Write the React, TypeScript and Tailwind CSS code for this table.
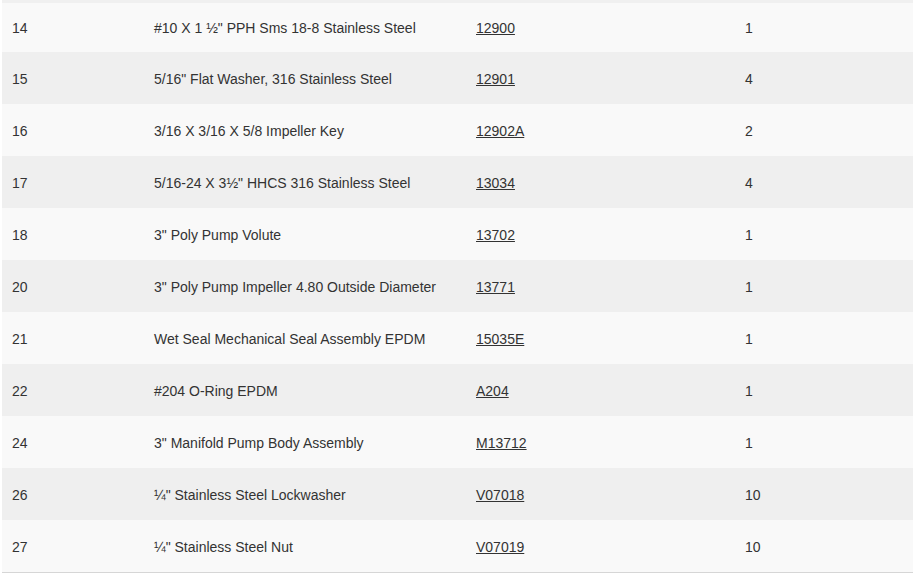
const rows = [
  ["14", "#10 X 1 ½\" PPH Sms 18-8 Stainless Steel", "12900", "1"],
  ["15", "5/16\" Flat Washer, 316 Stainless Steel", "12901", "4"],
  ["16", "3/16 X 3/16 X 5/8 Impeller Key", "12902A", "2"],
  ["17", "5/16-24 X 3½\" HHCS 316 Stainless Steel", "13034", "4"],
  ["18", "3\" Poly Pump Volute", "13702", "1"],
  ["20", "3\" Poly Pump Impeller 4.80 Outside Diameter", "13771", "1"],
  ["21", "Wet Seal Mechanical Seal Assembly EPDM", "15035E", "1"],
  ["22", "#204 O-Ring EPDM", "A204", "1"],
  ["24", "3\" Manifold Pump Body Assembly", "M13712", "1"],
  ["26", "¼\" Stainless Steel Lockwasher", "V07018", "10"],
  ["27", "¼\" Stainless Steel Nut", "V07019", "10"],
];

export default function App() {
  return (
    <div className="w-[918px] h-[582px] bg-white pl-[2px] pr-[5px] font-['Liberation_Sans',Arial,sans-serif] text-[14px] text-[#333]">
      <div className="border-t-[3px] border-[#f0f0f0] border-b border-b-[#d6d6d6]">
        {rows.map((r, idx) => (
          <div
            key={idx}
            className={`grid grid-cols-[142px_322px_269px_1fr] items-center pt-[2px] ${idx === 0 ? "h-[49px]" : "h-[52px]"} ${idx % 2 === 0 ? "bg-[#f9f9f9]" : "bg-[#efefef]"}`}
          >
            <div className="pl-[10px]">{r[0]}</div>
            <div className="pl-[10px]">{r[1]}</div>
            <div className="pl-[10px]">
              <a href="#" className="underline text-[#333]">{r[2]}</a>
            </div>
            <div className="pl-[10px]">{r[3]}</div>
          </div>
        ))}
      </div>
    </div>
  );
}
